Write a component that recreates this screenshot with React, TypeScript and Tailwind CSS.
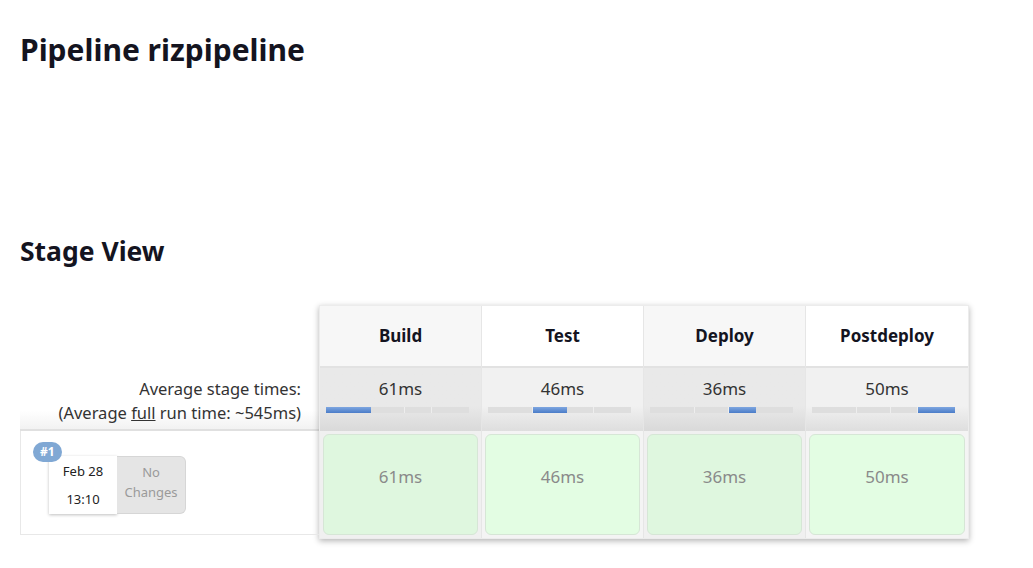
import React from 'react';

const stages = [
  { name: 'Build', ms: 61 },
  { name: 'Test', ms: 46 },
  { name: 'Deploy', ms: 36 },
  { name: 'Postdeploy', ms: 50 },
];

const total = stages.reduce((s, x) => s + x.ms, 0);

function TimeBar({ active }: { active: number }) {
  return (
    <div className="flex h-[6px] w-[143px] ml-[6px]">
      {stages.map((s, i) => (
        <div
          key={s.name}
          className={
            i === active
              ? 'h-full bg-gradient-to-b from-[#7ea6e0] to-[#4a7cc8]'
              : 'h-full bg-[#dedede] border-r border-[#eeeeee] last:border-r-0'
          }
          style={{ width: `${(s.ms / total) * 100}%` }}
        />
      ))}
    </div>
  );
}

export default function App() {
  return (
    <div className="min-h-screen bg-white px-5 text-[#14141f] font-['Noto_Sans',sans-serif]">
      <h1 className="pt-[30px] text-[30px] font-bold leading-[40px]">Pipeline rizpipeline</h1>

      <h2 className="mt-[163px] text-[26.5px] font-bold leading-[36px]">Stage View</h2>

      <div className="mt-[36px] flex">
        {/* left column */}
        <div className="w-[299px] flex flex-col">
          <div className="h-[63px]" />
          <div className="h-[63px] flex flex-col justify-center items-end pt-[4px] pr-[18px] text-[16.5px] leading-[24px] text-[#333] bg-gradient-to-b from-white from-70% to-[#f2f2f2] border-b-2 border-[#e0e0e0]">
            <div>Average stage times:</div>
            <div>
              (Average <span className="underline">full</span> run time: ~545ms)
            </div>
          </div>
          <div className="relative h-[104px] border-l border-b border-[#e8e8e8]">
            <div className="absolute left-[12px] top-[11px] z-10 h-[20px] px-[7px] rounded-full bg-[#80a8d4] text-white text-[12px] font-bold leading-[20px]">
              #1
            </div>
            <div className="flex ml-[28px] mt-[25px]">
              <div className="w-[68px] h-[58px] bg-white shadow-[0_1px_3px_rgba(0,0,0,0.25)] flex flex-col items-center justify-center gap-[8px] text-[13px] leading-[20px] text-[#222]">
                <div>Feb 28</div>
                <div>13:10</div>
              </div>
              <div className="w-[69px] h-[58px] bg-[#e5e5e5] border border-l-0 border-[#d6d6d6] rounded-r-[6px] flex flex-col items-center justify-center text-[13px] leading-[20px] text-[#9a9a9a]">
                <div className="-mt-[6px]">No</div>
                <div>Changes</div>
              </div>
            </div>
          </div>
        </div>

        {/* stage table */}
        <div className="flex shadow-[0_2px_6px_rgba(0,0,0,0.3)] border border-[#ececec]">
          {stages.map((s, i) => {
            const odd = i % 2 === 0;
            return (
              <div key={s.name} className="w-[162px] flex flex-col border-r border-[#e6e6e6] last:border-r-0">
                <div
                  className={
                    'h-[62px] flex items-center justify-center text-[17px] font-bold border-b-2 border-[#e2e2e2] ' +
                    (odd ? 'bg-[#f7f7f7]' : 'bg-white')
                  }
                >
                  {s.name}
                </div>
                <div
                  className={
                    'h-[63px] flex flex-col pt-[9px] ' +
                    (odd
                      ? 'bg-gradient-to-b from-[#e9e9e9] from-60% to-[#d9d9d9]'
                      : 'bg-gradient-to-b from-[#f1f1f1] from-60% to-[#dedede]')
                  }
                >
                  <div className="text-center text-[17px] leading-[24px] text-[#333]">{s.ms}ms</div>
                  <div className="mt-[6px] w-full">
                    <TimeBar active={i} />
                  </div>
                </div>
                <div className={'h-[107px] p-[3px] ' + (odd ? 'bg-[#f0f0f0]' : 'bg-[#f4f4f4]')}>
                  <div
                    className={
                      'h-full rounded-[6px] border border-[#d6e6d6] flex items-center justify-center text-[17px] text-[#8a8a8a] ' +
                      (odd ? 'bg-[#dff7df]' : 'bg-[#e3fde3]')
                    }
                  >
                    <span className="-mt-[16px]">{s.ms}ms</span>
                  </div>
                </div>
              </div>
            );
          })}
        </div>
      </div>
    </div>
  );
}
